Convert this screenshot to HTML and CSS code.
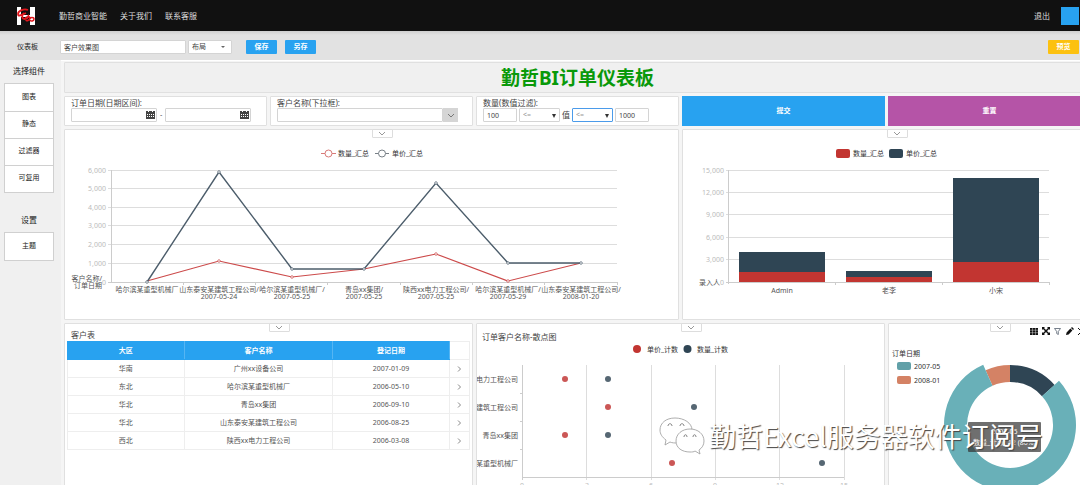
FILE: index.html
```html
<!DOCTYPE html>
<html lang="zh-CN">
<head>
<meta charset="utf-8">
<title>勤哲BI订单仪表板</title>
<link rel="stylesheet" href="styles.css">
</head>
<body>
<div class="app">
  <header class="topbar">
    <svg class="logo" width="20" height="20" viewBox="0 0 20 20" aria-label="logo">
      <path fill="#fff" d="M1 1h4v18H1zM14 1h5v18h-5zM5 9h9v2H5z"/>
      <path d="M12 4C8 2 2 5 2 8s3 1 8-1M8 7c-3 3-2 6 1 6s4-3 3-4" fill="none" stroke="#e0161c" stroke-width="1.800"/>
      <path d="M9 13c1-3 5-3 5-1s-4 4-4 2M14 13c0-2 4-2 4 0s-3 3-4 1" fill="none" stroke="#e0161c" stroke-width="1.500"/>
    </svg>
    <nav class="nav"><a href="#">勤哲商业智能</a><a href="#">关于我们</a><a href="#">联系客服</a></nav>
    <a class="logout" href="#">退出</a>
    <span class="avatar"></span>
  </header>

  <div class="toolbar">
    <label class="toolbar-label" for="name">仪表板</label>
    <input class="name field" id="name" type="text" value="客户效果图">
    <select class="layout field" aria-label="布局"><option>布局</option></select>
    <button class="btn save" type="button">保存</button>
    <button class="btn" type="button">另存</button>
    <button class="btn preview" type="button">预览</button>
  </div>

  <div class="main">
    <aside class="sidebar">
      <h2>选择组件</h2>
      <div class="group">
        <button type="button">图表</button><button type="button">静态</button><button type="button">过滤器</button><button type="button">可复用</button>
      </div>
      <h2 class="settings">设置</h2>
      <div class="group"><button type="button">主题</button></div>
    </aside>

    <main class="board">
      <div class="panel title"><h1>勤哲BI订单仪表板</h1></div>

      <section class="panel filter">
        <label for="from">订单日期(日期区间):</label>
        <div class="controls">
          <span class="date"><input class="field" id="from" type="text"><svg width="9" height="9" viewBox="0 0 9 9"><path d="M0 1h9v8H0z" fill="#444"/><path d="M1 4h1v1H1zM3 4h1v1H3zM5 4h1v1H5zM7 4h1v1H7zM1 6h1v1H1zM3 6h1v1H3zM5 6h1v1H5zM7 6h1v1H7zM2 0h1v2H2zM6 0h1v2H6z" fill="#fff"/></svg></span>
          <span class="dash">-</span>
          <span class="date"><input class="field" type="text" aria-label="结束日期"><svg width="9" height="9" viewBox="0 0 9 9"><path d="M0 1h9v8H0z" fill="#444"/><path d="M1 4h1v1H1zM3 4h1v1H3zM5 4h1v1H5zM7 4h1v1H7zM1 6h1v1H1zM3 6h1v1H3zM5 6h1v1H5zM7 6h1v1H7zM2 0h1v2H2zM6 0h1v2H6z" fill="#fff"/></svg></span>
        </div>
      </section>
      <section class="panel filter">
        <label for="customer">客户名称(下拉框):</label>
        <div class="controls combo">
          <input class="field" id="customer" type="text">
          <button type="button" aria-label="展开"><svg width="8" height="5" viewBox="0 0 8 5"><path d="M1 1l3 3 3-3" fill="none" stroke="#777"/></svg></button>
        </div>
      </section>
      <section class="panel filter">
        <label for="min">数量(数值过滤):</label>
        <div class="controls range">
          <input class="field" id="min" type="text" value="100">
          <span class="op"><select class="field" aria-label="下限比较"><option>&lt;=</option></select></span>
          <span class="value">值</span>
          <span class="op active"><select class="field" aria-label="上限比较"><option>&lt;=</option></select></span>
          <input class="field" type="text" value="1000" aria-label="上限">
        </div>
      </section>
      <button class="action submit" type="button">提交</button>
      <button class="action reset" type="button">重置</button>

      <section class="panel wide3">
        <button class="handle" type="button" aria-label="菜单"><svg width="8" height="5" viewBox="0 0 8 5"><path d="M1 1l3 3 3-3" fill="none" stroke="#999"/></svg></button>
        <svg class="chart" viewBox="65 129 613 189">
          <g fill="#fff"><path d="M321 152.500h15" stroke="#d87a78"/><circle cx="328.500" cy="152.500" r="3.500" stroke="#d87a78"/><path d="M375 152.500h14" stroke="#777f86"/><circle cx="382" cy="152.500" r="3.500" stroke="#777f86"/></g>
          <text class="dark" x="338" y="155">数量_汇总</text><text class="dark" x="392" y="155">单价_汇总</text>
          <path class="grid" d="M108 169.500h509M108 187.500h509M108 206.500h509M108 224.500h509M108 243.500h509M108 262.500h509"/>
          <path class="axis" d="M111.500 169v112M108 281.500h509M183.500 281v3M255.500 281v3M327.500 281v3M400.500 281v3M472.500 281v3M544.500 281v3M617.500 281v3"/>
          <g class="tick end"><text x="106" y="172">6,000</text><text x="106" y="190">5,000</text><text x="106" y="209">4,000</text><text x="106" y="227">3,000</text><text x="106" y="246">2,000</text><text x="106" y="265">1,000</text><text x="106" y="284">0</text></g>
          <g class="end"><text x="102" y="280">客户名称/</text><text x="102" y="287">订单日期</text></g>
          <g class="mid">
            <text x="147" y="291">哈尔滨某重型机械厂</text>
            <text x="219" y="291">山东泰安某建筑工程公司/</text><text x="219" y="298">2007-05-24</text>
            <text x="292" y="291">哈尔滨某重型机械厂/</text><text x="292" y="298">2007-05-25</text>
            <text x="364" y="291">青岛xx集团/</text><text x="364" y="298">2007-05-25</text>
            <text x="436" y="291">陕西xx电力工程公司/</text><text x="436" y="298">2007-05-25</text>
            <text x="508" y="291">哈尔滨某重型机械厂/</text><text x="508" y="298">2007-05-29</text>
            <text x="581" y="291">山东泰安某建筑工程公司/</text><text x="581" y="298">2008-01-20</text>
          </g>
          <path d="M147 280L219 260L292 276L364 268L436 253L508 280L581 262" fill="none" stroke="#cc4a4a" stroke-width="1.200"/>
          <path d="M147 281L219 171L292 268L364 268L436 182L508 262L581 262" fill="none" stroke="#4c5d6b" stroke-width="1.400"/>
          <g fill="#fff" stroke="#cc4a4a" stroke-width=".7"><circle cx="219" cy="260" r="1.300"/><circle cx="292" cy="276" r="1.300"/><circle cx="436" cy="253" r="1.300"/><circle cx="508" cy="280" r="1.300"/></g>
          <g fill="#fff" stroke="#4c5d6b" stroke-width=".7"><circle cx="147" cy="281" r="1.300"/><circle cx="219" cy="171" r="1.300"/><circle cx="292" cy="268" r="1.300"/><circle cx="364" cy="268" r="1.300"/><circle cx="436" cy="182" r="1.300"/><circle cx="508" cy="262" r="1.300"/><circle cx="581" cy="262" r="1.300"/></g>
        </svg>
      </section>

      <section class="panel wide2">
        <button class="handle" type="button" aria-label="菜单"><svg width="8" height="5" viewBox="0 0 8 5"><path d="M1 1l3 3 3-3" fill="none" stroke="#999"/></svg></button>
        <svg class="chart" viewBox="683 129 407 189">
          <rect x="836" y="148" width="14" height="9" rx="2" fill="#c23531"/><text class="dark" x="853" y="155">数量_汇总</text>
          <rect x="889" y="148" width="14" height="9" rx="2" fill="#2f4554"/><text class="dark" x="906" y="155">单价_汇总</text>
          <path class="grid" d="M726 169.500h323M726 191.500h323M726 213.500h323M726 236.500h323M726 258.500h323"/>
          <path class="axis" d="M728.500 169v114M726 281.500h323M835.500 281v3M942.500 281v3M1049.500 281v3"/>
          <g class="tick end"><text x="724" y="172">15,000</text><text x="724" y="194">12,000</text><text x="724" y="216">9,000</text><text x="724" y="239">6,000</text><text x="724" y="261">3,000</text><text x="724" y="284">0</text></g>
          <text class="end" x="720" y="284">录入人</text>
          <g fill="#2f4554"><path d="M739 251h86v20h-86zM846 270h86v6h-86zM953 177h86v84h-86z"/></g>
          <g fill="#c23531"><path d="M739 271h86v10h-86zM846 276h86v5h-86zM953 261h86v20h-86z"/></g>
          <g class="mid"><text x="782" y="292">Admin</text><text x="889" y="292">老李</text><text x="996" y="292">小宋</text></g>
        </svg>
      </section>

      <section class="panel wide2 table-panel">
        <button class="handle" type="button" aria-label="菜单"><svg width="8" height="5" viewBox="0 0 8 5"><path d="M1 1l3 3 3-3" fill="none" stroke="#999"/></svg></button>
        <h3>客户表</h3>
        <table>
          <thead><tr><th class="c-area">大区</th><th class="c-name">客户名称</th><th class="c-date">登记日期</th><td class="c-more"></td></tr></thead>
          <tbody>
            <tr><td>华南</td><td>广州xx设备公司</td><td>2007-01-09</td><td class="more"><svg width="4" height="6" viewBox="0 0 4 6"><path d="M1 .5L3.500 3 1 5.500"/></svg></td></tr>
            <tr><td>东北</td><td>哈尔滨某重型机械厂</td><td>2006-05-10</td><td class="more"><svg width="4" height="6" viewBox="0 0 4 6"><path d="M1 .5L3.500 3 1 5.500"/></svg></td></tr>
            <tr><td>华北</td><td>青岛xx集团</td><td>2006-09-10</td><td class="more"><svg width="4" height="6" viewBox="0 0 4 6"><path d="M1 .5L3.500 3 1 5.500"/></svg></td></tr>
            <tr><td>华北</td><td>山东泰安某建筑工程公司</td><td>2006-08-25</td><td class="more"><svg width="4" height="6" viewBox="0 0 4 6"><path d="M1 .5L3.500 3 1 5.500"/></svg></td></tr>
            <tr><td>西北</td><td>陕西xx电力工程公司</td><td>2006-03-08</td><td class="more"><svg width="4" height="6" viewBox="0 0 4 6"><path d="M1 .5L3.500 3 1 5.500"/></svg></td></tr>
          </tbody>
        </table>
      </section>

      <section class="panel wide2">
        <button class="handle" type="button" aria-label="菜单"><svg width="8" height="5" viewBox="0 0 8 5"><path d="M1 1l3 3 3-3" fill="none" stroke="#999"/></svg></button>
        <svg class="chart" viewBox="477 323 407 182">
          <text class="heading" x="482" y="339">订单客户名称-散点图</text>
          <circle cx="637" cy="348" r="4" fill="#c23531"/><text class="dark" x="647" y="351">单价_计数</text>
          <circle cx="687.500" cy="348" r="4" fill="#2f4554"/><text class="dark" x="697" y="351">数量_计数</text>
          <path class="grid" d="M586.500 364v115M651.500 364v115M715.500 364v115M779.500 364v115M844.500 364v115"/>
          <path class="axis" d="M522.500 364v115M522 476.500h322M520 392.500h2M520 420.500h2M520 448.500h2"/>
          <g class="end"><text x="518" y="381">电力工程公司</text><text x="518" y="409">建筑工程公司</text><text x="518" y="437">青岛xx集团</text><text x="518" y="465">某重型机械厂</text></g>
          <g fill="#cb5756"><circle cx="565" cy="378" r="3"/><circle cx="608" cy="406" r="3"/><circle cx="565" cy="434" r="3"/><circle cx="672" cy="462" r="3"/></g>
          <g fill="#566773"><circle cx="608" cy="378" r="3"/><circle cx="694" cy="406" r="3"/><circle cx="608" cy="434" r="3"/><circle cx="822" cy="462" r="3"/></g>
          <g class="tick mid"><text x="522" y="487">0</text><text x="587" y="487">3</text><text x="651" y="487">6</text><text x="715" y="487">9</text><text x="780" y="487">12</text><text x="844" y="487">15</text></g>
        </svg>
      </section>

      <section class="panel">
        <button class="handle" type="button" aria-label="菜单"><svg width="8" height="5" viewBox="0 0 8 5"><path d="M1 1l3 3 3-3" fill="none" stroke="#999"/></svg></button>
        <div class="tools">
          <button type="button" aria-label="表格"><svg width="8" height="7" viewBox="0 0 8 7"><path fill="#111" d="M0 0h8v7H0z"/><path d="M2.500 0v7M5.500 0v7M0 2.200h8M0 4.700h8" stroke="#fff" stroke-width=".4"/></svg></button>
          <button type="button" aria-label="全屏"><svg width="8" height="8" viewBox="0 0 8 8"><path d="M1 1l6 6M7 1L1 7" stroke="#111" stroke-width="1.500"/><path fill="#111" d="M0 0h3L0 3zM8 0v3L5 0zM0 8V5l3 3zM8 8H5l3-3z"/></svg></button>
          <button type="button" aria-label="筛选"><svg width="7" height="7" viewBox="0 0 7 7"><path d="M.5.500h6L4.300 3.500v3L2.700 5.500v-2z" fill="none" stroke="#54606e" stroke-width=".8"/></svg></button>
          <button type="button" aria-label="编辑"><svg width="8" height="8" viewBox="0 0 8 8"><path fill="#111" d="M0 8l.6-2.600 3.800-3.800 2 2L2.600 7.400zM5 1l1-1 2 2-1 1z"/></svg></button>
          <button type="button" aria-label="删除"><svg width="7" height="7" viewBox="0 0 7 7"><path d="M0 0l7 7M7 0L0 7" stroke="#111"/></svg></button>
        </div>
        <svg class="chart" viewBox="889 323 201 182">
          <text class="dark" x="892" y="355">订单日期</text>
          <rect x="897" y="361" width="14" height="8" rx="2" fill="#61a0a8"/><text class="dark" x="914" y="368">2007-05</text>
          <rect x="897" y="375" width="14" height="8" rx="2" fill="#d48265"/><text class="dark" x="914" y="382">2008-01</text>
          <path fill="#2f4554" d="M1010 364A60 60 0 0 1 1054.600 383.900L1042 395.200A43 43 0 0 0 1010 381z"/>
          <path fill="#d48265" d="M985.600 369.200A60 60 0 0 1 1010 364V381A43 43 0 0 0 992.500 384.700z"/>
          <path fill="#69b0b8" d="M1059 379.800A66 66 0 1 1 983.200 363.700L992.500 384.700A43 43 0 1 0 1042 395.200z"/>
        </svg>
        <div class="tooltip">2007-05<br>数量_计数: 12 (80%)</div>
      </section>
    </main>
  </div>

  <div class="watermark">
    <svg width="46" height="38" viewBox="0 0 46 38">
      <g fill="#fff" stroke="#999" stroke-width=".8">
        <path d="M16 1C7 1 1 6 1 13c0 4 2 7 6 10l-1 5 5-3c2 1 5 1 8 1 8-1 14-6 14-13S25 1 16 1z"/>
        <path d="M31 12c-8 0-14 5-14 12s6 11 14 11c2 0 4 0 5-1l5 3-1-4c3-2 5-5 5-9 0-7-6-12-14-12z"/>
        <path fill="none" stroke="#666" d="M9 9c0-3 4-3 4 0M21 9c0-3 4-3 4 0M25 20c0-3 3-3 3 0M34 20c0-3 3-3 3 0"/>
      </g>
    </svg>
    <span>勤哲Excel服务器软件订阅号</span>
  </div>
</div>
</body>
</html>
```
FILE: styles.css
```css
* { box-sizing: border-box; }
body { margin: 0; font: 7px/10px "Noto Sans", "Noto Sans CJK SC", sans-serif; color: #444; background: #fff; }
button, input, select { font: inherit; color: inherit; margin: 0; padding: 0; }
button { cursor: pointer; border: 0; }
h1, h2, h3 { margin: 0; font-weight: 400; }
svg { display: block; }
.app { position: relative; height: 100vh; overflow: hidden; display: flex; flex-direction: column; }

.topbar { flex: none; height: 31px; background: #111; display: flex; align-items: center; padding: 0 1px 0 16px; color: #ddd; font-size: 8px; }
.topbar a { color: inherit; text-decoration: none; }
.nav { display: flex; gap: 13px; margin-left: 23px; }
.logout { margin-left: auto; }
.avatar { width: 18px; height: 18px; background: #28a2f0; margin-left: 11px; }

.toolbar { flex: none; height: 29px; display: flex; align-items: center; padding: 3px 1px 0 17px; background: linear-gradient(#cfcfcf, #e2e2e2 4px); }
.toolbar-label { width: 43px; color: #222; }
.field { height: 14px; border: 1px solid #d4d4d4; border-radius: 1px; background: #fff; padding: 0 3px; outline: 0; }
.name { width: 126px; }
.layout { width: 44px; margin-left: 2px; appearance: none; background: url("data:image/svg+xml,%3Csvg xmlns='http://www.w3.org/2000/svg' width='4' height='3'%3E%3Cpath d='M0 0h4L2 2z' fill='%23666'/%3E%3C/svg%3E") no-repeat right 6px center #fff; }
.btn { width: 31px; height: 14px; margin-left: 8px; border-radius: 1px; background: #28a2f0; color: #fff; font-weight: 700; }
.save { margin-left: 14px; }
.preview { margin-left: auto; background: #fcc110; }

.main { flex: 1; min-height: 0; display: flex; }
.sidebar { flex: none; width: 61px; background: #f0f0f0; padding: 5px 7px 0 4px; text-align: center; color: #222; }
.sidebar h2 { font-size: 8px; line-height: 12px; padding-bottom: 6px; }
.group { border: 1px solid #d0d0d0; background: #fff; display: flex; flex-direction: column; }
.group button { height: 27px; line-height: 24px; padding-bottom: 2px; background: #fff; }
.group button + button { border-top: 1px solid #d0d0d0; }
.sidebar .settings { padding-top: 21px; }

.board { flex: 1; min-width: 0; margin-right: -11px; display: grid; grid-template-columns: repeat(5, minmax(0, 1fr)); grid-template-rows: 31px 30px 191px auto; align-content: start; gap: 3px; padding: 1px 0 0 3px; background: #f5f5f5; border-top: 1px solid #fff; }
.panel { position: relative; min-width: 0; background: #fff; border: 1px solid #e0e0e0; border-radius: 1px; }
.title { grid-column: 1 / -1; background: #f0f0f0; display: flex; align-items: center; justify-content: center; }
.title h1 { font: 700 19px/28px "Noto Sans", "Noto Sans CJK SC", sans-serif; color: #099909; }
.wide2 { grid-column: span 2; }
.wide3 { grid-column: span 3; }

.filter { padding: 0 6px; }
.filter label { display: block; font-size: 8px; line-height: 11px; }
.controls { display: flex; align-items: center; gap: 3px; }
.date { position: relative; flex: 0 1 86px; }
.date .field { width: 100%; display: block; }
.date svg { position: absolute; right: 2px; top: 2px; }
.combo { gap: 0; padding-right: 8px; }
.combo .field { flex: 1; min-width: 0; }
.combo button { width: 15px; height: 14px; display: grid; place-items: center; background: #d5d5d5; }
.range { gap: 2px; }
.range .field { width: 34px; }
.op { position: relative; }
.op::after { content: ""; position: absolute; right: 4px; top: 6px; border: 2px solid transparent; border-top: 4px solid #333; border-bottom: 0; }
.range .op .field { width: 41px; appearance: none; display: block; color: #999; }
.range .active .field { border-color: #4b9bea; }
.value { font-size: 8px; }
.action { color: #fff; font-weight: 700; }
.submit { background: #28a2f0; }
.reset { background: #b554a7; }

.handle { position: absolute; z-index: 1; left: 50%; top: -1px; width: 21px; height: 9px; display: grid; place-items: center; background: #fff; border: 1px solid #ddd; border-radius: 1px; }
.chart { width: 100%; height: auto; }
.chart text { fill: #555; }
.chart .dark { fill: #333; }
.chart .heading { fill: #444; font-size: 8px; }
.chart .tick text { fill: #bbb; }
.end { text-anchor: end; }
.mid { text-anchor: middle; }
.grid { stroke: #ddd; fill: none; }
.axis { stroke: #ccc; fill: none; }

.table-panel { padding: 5px 2px; }
.table-panel h3 { font-size: 8px; line-height: 12px; padding-left: 4px; }
table { width: 100%; table-layout: fixed; border-collapse: collapse; text-align: center; color: #555; }
th, td { padding: 0; height: 18px; border: 1px solid #eee; }
th { background: #28a2f0; color: #fff; border-color: #28a2f0; border-right-color: #55b5f3; }
.c-area, .c-date { width: 29%; }
.c-name { width: 37%; }
.c-more { width: 5%; }
.more svg { margin: 0 auto; fill: none; stroke: #888; }

.tools { position: absolute; z-index: 1; top: 3px; right: 4px; display: flex; align-items: center; gap: 4px; }
.tools button { width: 8px; background: none; }
.tooltip { position: absolute; left: 79px; top: 98px; padding: 4px 5px; border-radius: 1px; background: rgba(50, 50, 50, .7); color: #fff; line-height: 11px; text-align: center; white-space: nowrap; }
.watermark { position: absolute; z-index: 2; left: 659px; top: 416px; display: flex; align-items: center; gap: 4px; pointer-events: none; color: #fff; font: 27px/40px "Noto Sans CJK SC", sans-serif; text-shadow: 1px 1px 1px #444; white-space: nowrap; }
```
